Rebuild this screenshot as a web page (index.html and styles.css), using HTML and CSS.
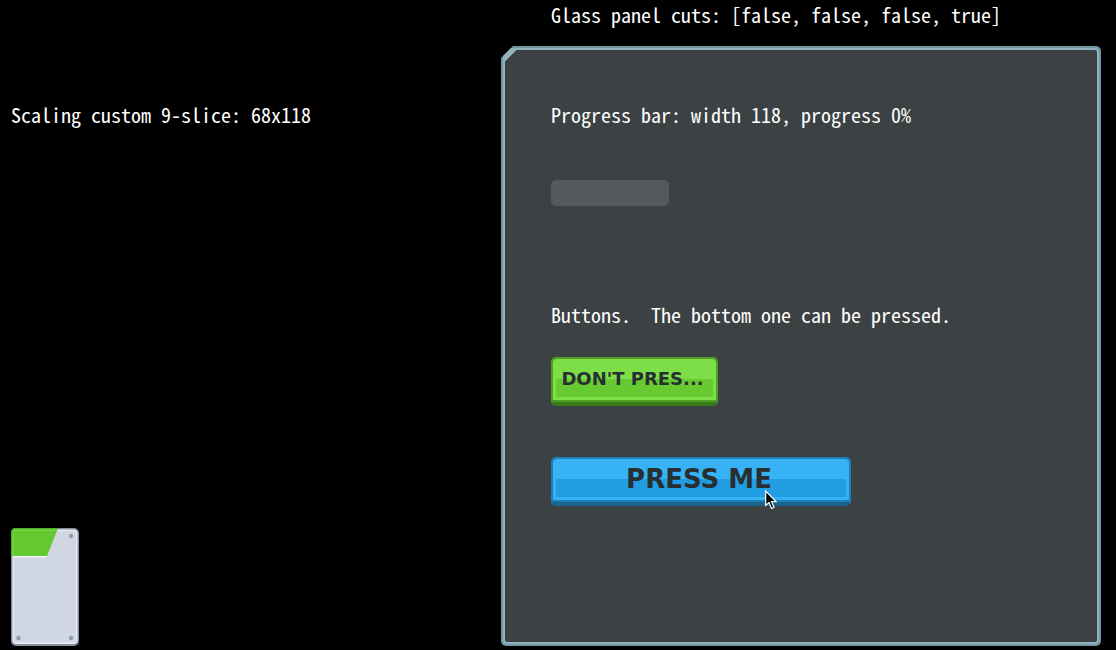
FILE: index.html
```
<!DOCTYPE html>
<html lang="en">
<head>
<meta charset="utf-8">
<title>UI panels</title>
<link rel="stylesheet" href="styles.css">
</head>
<body>
<main class="stage">
  <section class="slice-demo">
    <p class="caption">Scaling custom 9-slice: 68x118</p>
    <svg class="slice" width="68" height="118" viewBox="0 0 68 118" aria-hidden="true">
      <rect width="68" height="118" rx="5" fill="#868e9a"/>
      <rect x="1.5" y="1.5" width="65" height="114.5" rx="4" fill="#e8eef9"/>
      <rect x="3" y="3" width="62" height="111.500" rx="2" fill="#d0d7e2"/>
      <path d="M2 28.500H36" stroke="#eef3fb" stroke-width="2"/>
      <path d="M5 0H47L36 28H0V5Q0 0 5 0Z" fill="#64c92e"/>
      <path d="M.5 28V5Q.5.500 5 .5H47" fill="none" stroke="#57ad30"/>
      <path d="M2.500 28V5Q2.500 2.500 5 2.500H45" fill="none" stroke="#76d940"/>
      <g fill="#929ba6"><circle cx="60" cy="8" r="2.200"/><circle cx="7.500" cy="110" r="2.200"/><circle cx="60" cy="110" r="2.200"/></g>
    </svg>
  </section>
  <section class="panel-demo">
    <p class="caption">Glass panel cuts: [false, false, false, true]</p>
    <div class="panel">
      <div class="panel-body">
        <p class="caption" id="progress-label">Progress bar: width 118, progress 0%</p>
        <div class="progress" role="progressbar" aria-labelledby="progress-label" aria-valuenow="0" aria-valuemin="0" aria-valuemax="100"></div>
        <p class="caption">Buttons.&nbsp; The bottom one can be pressed.</p>
        <button class="button button-green" type="button">DON'T PRES...</button>
        <button class="button button-blue" type="button">PRESS ME
          <svg class="cursor" width="12" height="20" viewBox="0 0 12 20" aria-hidden="true"><path d="M.7 1V15.500L4 12.500L6.500 18.500L9 17.500L6.500 11.700H11Z" fill="#000" stroke="#fff" stroke-width="1.200"/></svg>
        </button>
      </div>
    </div>
  </section>
</main>
</body>
</html>
```
FILE: styles.css
```
* { box-sizing: border-box; }
body {
  margin: 0;
  background: #000;
  color: #fff;
}
.stage {
  display: grid;
  grid-template-columns: minmax(0, 49fr) minmax(0, 60fr);
  min-height: 100vh;
  padding: 0 15px 4px 11px;
}
.caption {
  margin: 0;
  font-family: "Noto Sans Mono CJK JP", "Noto Sans CJK JP", "Liberation Mono", monospace;
  font-feature-settings: "hwid";
  font-size: 20px;
  line-height: 30px;
  white-space: nowrap;
}
.slice-demo {
  display: flex;
  flex-direction: column;
  justify-content: space-between;
  padding-top: 100px;
}
.slice { display: block; }
.panel-demo {
  display: flex;
  flex-direction: column;
  gap: 16px;
}
.panel-demo > .caption { padding-left: 50px; }
.panel {
  flex: 1;
  display: flex;
  padding: 2px;
  border-radius: 5px;
  background: #7295a2;
  clip-path: polygon(12px 0, 100% 0, 100% 100%, 0 100%, 0 12px);
}
.panel-body {
  flex: 1;
  display: flex;
  flex-direction: column;
  align-items: flex-start;
  padding: 50px 46px;
  border: 2px solid #91b2be;
  border-radius: 4px;
  background:
    linear-gradient(135deg, #91b2be 8px, transparent 8px),
    #3c4143;
}
.progress {
  width: 118px;
  height: 26px;
  margin: 50px 0 94px;
  border-radius: 5px;
  background: #56595b;
}
.button {
  position: relative;
  height: 49px;
  padding: 0 4px 4px 0;
  border: 2px solid;
  border-bottom-width: 4px;
  border-radius: 5px;
  color: #282f32;
  font-family: "DejaVu Sans", sans-serif;
  font-weight: bold;
  line-height: 40px;
  white-space: nowrap;
}
.button-green {
  width: 167px;
  margin: 27px 0 51px;
  border-color: #4fa022 #4fa022 #38791a;
  background: linear-gradient(#68ca31, #68ca31) 3px 20px / calc(100% - 6px) 18px no-repeat padding-box, linear-gradient(#7ede47 41px, #4fa022 41px) padding-box;
  font-size: 18px;
}
.button-blue {
  width: 300px;
  border-color: #1e80b6 #1e80b6 #19658e;
  background: linear-gradient(#239de1, #239de1) 3px 20px / calc(100% - 6px) 18px no-repeat padding-box, linear-gradient(#37b2f5 41px, #1e80b6 41px) padding-box;
  font-size: 26px;
}
.cursor {
  position: absolute;
  left: 212px;
  top: 31px;
}
```
